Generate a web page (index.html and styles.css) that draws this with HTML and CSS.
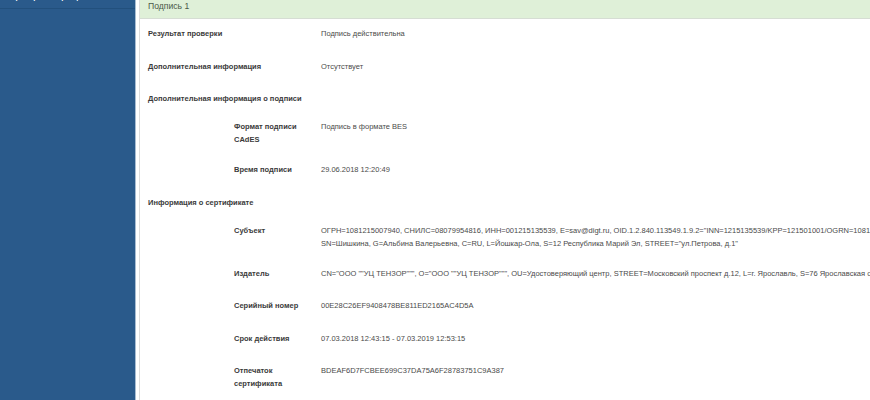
FILE: index.html
```html
<!DOCTYPE html>
<html lang="ru">
<head>
  <meta charset="UTF-8" />
  <title>Проверка подписи</title>
  <link rel="stylesheet" href="styles.css">
</head>
<body>
  <div class="layout">
    <aside class="sidebar">
      <a href="#" class="menu-item">Проверить сертификат</a>
    </aside>

    <main class="content">
      <section class="panel">
        <div class="panel-heading">Подпись 1</div>
        <div class="panel-body">
          <div class="row">
            <div class="label">Результат проверки</div>
            <div class="value">Подпись действительна</div>
          </div>
          <div class="row">
            <div class="label">Дополнительная информация</div>
            <div class="value">Отсутствует</div>
          </div>
          <div class="row title">
            <div class="label wide">Дополнительная информация о подписи</div>
          </div>
          <div class="group">
            <div class="row">
              <div class="label">Формат подписи CAdES</div>
              <div class="value">Подпись в формате BES</div>
            </div>
            <div class="row">
              <div class="label">Время подписи</div>
              <div class="value">29.06.2018 12:20:49</div>
            </div>
          </div>
          <div class="row title">
            <div class="label wide">Информация о сертификате</div>
          </div>
          <div class="group">
            <div class="row">
              <div class="label">Субъект</div>
              <div class="value nowrap">ОГРН=1081215007940, СНИЛС=08079954816, ИНН=001215135539, E=sav@digt.ru, OID.1.2.840.113549.1.9.2="INN=1215135539/KPP=121501001/OGRN=1081215007940", CN=Шишкина Альбина Валерьевна,<br>SN=Шишкина, G=Альбина Валерьевна, C=RU, L=Йошкар-Ола, S=12 Республика Марий Эл, STREET="ул.Петрова, д.1"</div>
            </div>
            <div class="row">
              <div class="label">Издатель</div>
              <div class="value nowrap">CN="ООО ""УЦ ТЕНЗОР""", O="ООО ""УЦ ТЕНЗОР""", OU=Удостоверяющий центр, STREET=Московский проспект д.12, L=г. Ярославль, S=76 Ярославская область, C=RU</div>
            </div>
            <div class="row">
              <div class="label">Серийный номер</div>
              <div class="value">00E28C26EF9408478BE811ED2165AC4D5A</div>
            </div>
            <div class="row">
              <div class="label">Срок действия</div>
              <div class="value">07.03.2018 12:43:15 - 07.03.2019 12:53:15</div>
            </div>
            <div class="row">
              <div class="label">Отпечаток сертификата</div>
              <div class="value">BDEAF6D7FCBEE699C37DA75A6F28783751C9A387</div>
            </div>
          </div>
        </div>
      </section>
    </main>
  </div>
</body>
</html>
```

FILE: styles.css
```css
* {
  margin: 0;
  padding: 0;
  box-sizing: border-box;
}

html, body {
  height: 100%;
  overflow: hidden;
}

body {
  background: #fff;
  font-family: "Liberation Sans", Arial, sans-serif;
  font-size: 7.5px;
  color: #333;
}

.layout {
  display: flex;
  height: calc(100% + 8px);
  margin-top: -8px;
}

/* sidebar */
.sidebar {
  width: 136px;
  flex-shrink: 0;
  background: #2a5a8b;
  border-right: 1px solid #a9bdd2;
}

.menu-item {
  display: block;
  padding: 0 10px 5px;
  margin-top: -2px;
  line-height: 13px;
  color: #fff;
  font-weight: bold;
  text-decoration: none;
  border-bottom: 1px solid #22507d;
}

/* main */
.content {
  flex: 1;
  min-width: 0;
  padding-left: 3px;
}

.panel {
  width: 1100px;
  height: 100%;
  border-left: 1px solid #dcdcdc;
}

.panel-heading {
  background: #dff0d8;
  color: #4a5a48;
  font-size: 8.6px;
  line-height: 13px;
  padding: 8px 8px 5px;
  border-bottom: 1px solid #d6ddd4;
}

.panel-body {
  padding: 0 8px;
}

.row {
  display: flex;
  padding: 8px 0 9px;
  min-height: 32.5px;
  line-height: 13px;
}

.row.title {
  min-height: 0;
  padding-bottom: 7px;
}

.label {
  width: 173px;
  flex-shrink: 0;
  font-weight: bold;
  color: #3a3a3a;
  padding-right: 8px;
}

.label.wide {
  width: auto;
}

.value {
  color: #4a4a4a;
}

.nowrap {
  white-space: nowrap;
}

.group {
  padding-left: 86px;
}

.group .label {
  width: 87px;
}
```
